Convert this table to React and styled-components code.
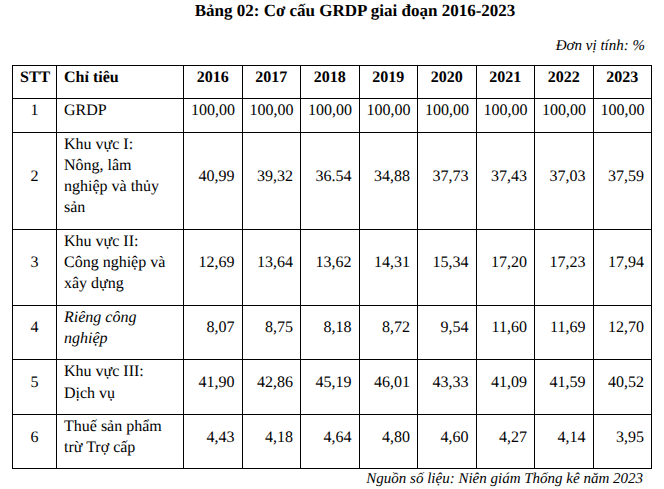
import React from "react";
import styled, { createGlobalStyle } from "styled-components";

const GlobalStyle = createGlobalStyle`
  html, body {
    margin: 0;
    padding: 0;
    background: #fff;
  }
  body {
    font-family: "Liberation Serif", "Times New Roman", serif;
    color: #000;
    text-rendering: geometricPrecision;
  }
`;

const SERIF = `"Liberation Serif", "Times New Roman", serif`;

const YEARS = ["2016", "2017", "2018", "2019", "2020", "2021", "2022", "2023"];

const ROWS = [
  { stt: "1", label: ["GRDP"], values: ["100,00", "100,00", "100,00", "100,00", "100,00", "100,00", "100,00", "100,00"] },
  { stt: "2", label: ["Khu vực I:", "Nông, lâm", "nghiệp và thủy", "sản"], values: ["40,99", "39,32", "36.54", "34,88", "37,73", "37,43", "37,03", "37,59"] },
  { stt: "3", label: ["Khu vực II:", "Công nghiệp và", "xây dựng"], values: ["12,69", "13,64", "13,62", "14,31", "15,34", "17,20", "17,23", "17,94"] },
  { stt: "4", label: ["Riêng công", "nghiệp"], italic: true, values: ["8,07", "8,75", "8,18", "8,72", "9,54", "11,60", "11,69", "12,70"] },
  { stt: "5", label: ["Khu vực III:", "Dịch vụ"], values: ["41,90", "42,86", "45,19", "46,01", "43,33", "41,09", "41,59", "40,52"] },
  { stt: "6", label: ["Thuế sản phẩm", "trừ Trợ cấp"], values: ["4,43", "4,18", "4,64", "4,80", "4,60", "4,27", "4,14", "3,95"] },
];

const Page = styled.div`
  width: 664px;
  height: 489px;
  padding: 0 13px 0 12px;
  box-sizing: border-box;
  overflow: hidden;
  font-family: ${SERIF};
  text-rendering: geometricPrecision;
`;

const Title = styled.h1`
  margin: 0;
  padding-left: 47px;
  font-family: ${SERIF};
  font-size: 17px;
  line-height: 21px;
  font-weight: bold;
  text-align: center;
`;

const Note = styled.div`
  margin-top: ${(p) => p.$gap}px;
  padding-right: ${(p) => p.$right}px;
  font-family: ${SERIF};
  font-size: 15px;
  line-height: 20px;
  font-style: italic;
  text-align: right;
`;

const Table = styled.table`
  margin-top: 9px;
  width: 639px;
  border-collapse: collapse;
  table-layout: fixed;
  font-family: ${SERIF};
  font-size: 16px;
  line-height: 21.3px;
`;

const Cell = styled.td`
  border: 1px solid #000;
  padding: 1px 7px 10px;
  vertical-align: middle;
  font-family: ${SERIF};
  font-size: 16px;
  line-height: 21.3px;
  text-align: ${(p) => p.$align || "left"};
  white-space: nowrap;
  font-style: ${(p) => (p.$italic ? "italic" : "normal")};
`;

const HeadCell = styled(Cell).attrs({ as: "th" })`
  font-weight: bold;
`;

const Line = styled.span`
  display: block;
`;

export default function App() {
  return (
    <>
      <GlobalStyle />
      <Page>
        <Title>Bảng 02: Cơ cấu GRDP giai đoạn 2016-2023</Title>
        <Note $gap={15} $right={6}>Đơn vị tính: %</Note>
        <Table>
          <colgroup>
            <col style={{ width: 44 }} />
            <col style={{ width: 127 }} />
            {YEARS.map((y) => (
              <col key={y} style={{ width: 58.5 }} />
            ))}
          </colgroup>
          <thead>
            <tr>
              <HeadCell $align="center">STT</HeadCell>
              <HeadCell $align="left">Chỉ tiêu</HeadCell>
              {YEARS.map((y) => (
                <HeadCell key={y} $align="center">{y}</HeadCell>
              ))}
            </tr>
          </thead>
          <tbody>
            {ROWS.map((row) => (
              <tr key={row.stt}>
                <Cell $align="center">{row.stt}</Cell>
                <Cell $italic={row.italic}>
                  {row.label.map((l) => (
                    <Line key={l}>{l}</Line>
                  ))}
                </Cell>
                {row.values.map((v, i) => (
                  <Cell key={i} $align="right">{v}</Cell>
                ))}
              </tr>
            ))}
          </tbody>
        </Table>
        <Note $gap={0} $right={8}>Nguồn số liệu: Niên giám Thống kê năm 2023</Note>
      </Page>
    </>
  );
}
